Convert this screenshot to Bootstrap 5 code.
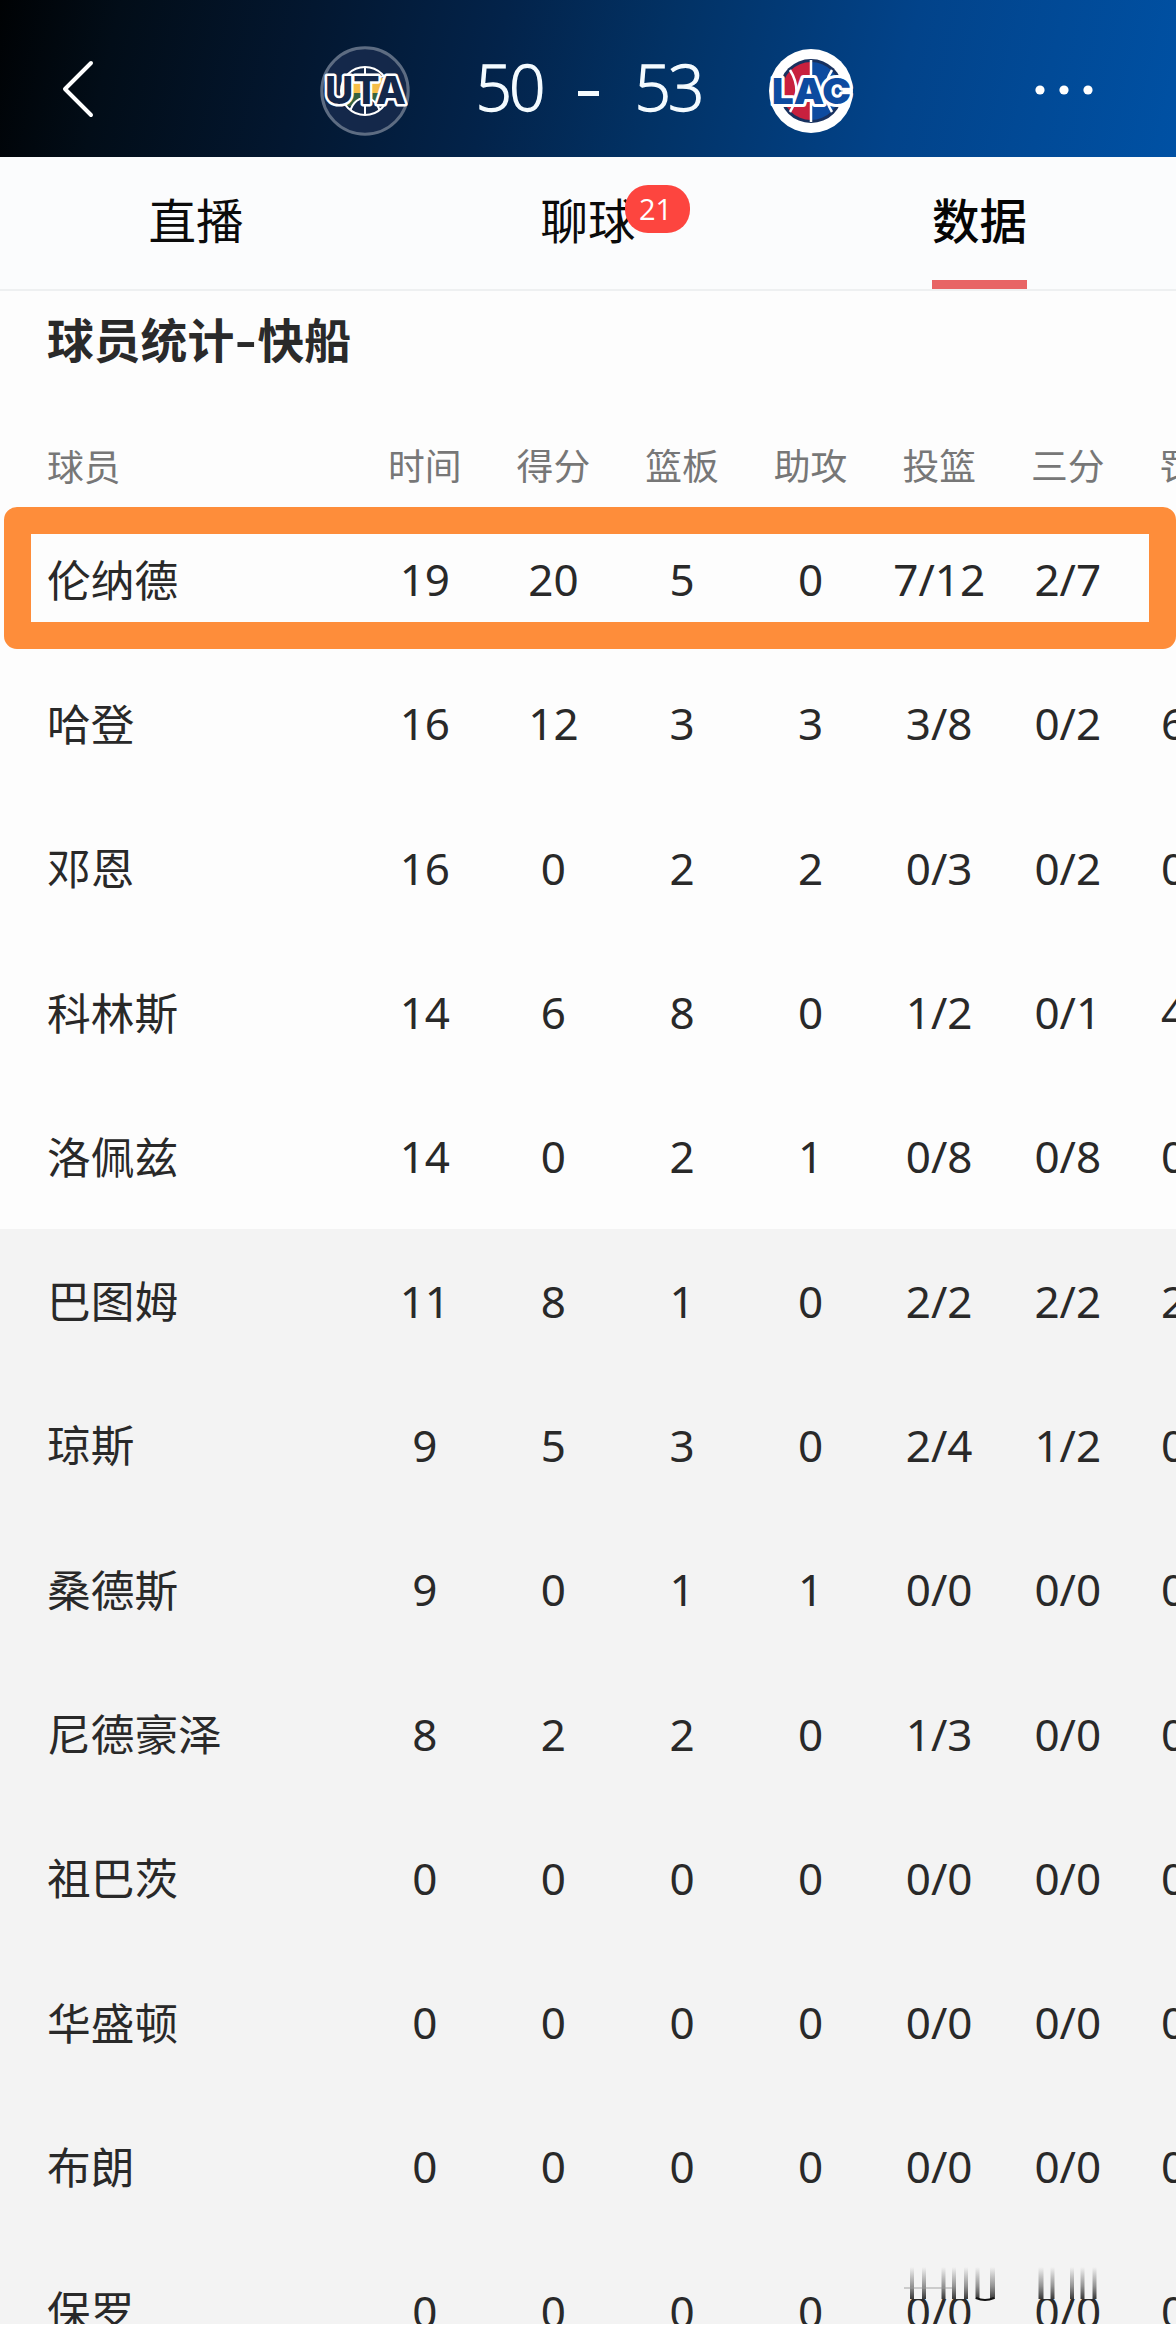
<!DOCTYPE html>
<html lang="zh-CN">
<head>
<meta charset="utf-8">
<meta name="viewport" content="width=device-width, initial-scale=1">
<title>球员统计</title>
<link href="https://cdn.jsdelivr.net/npm/bootstrap@5.3.0/dist/css/bootstrap.min.css" rel="stylesheet">
<style>
body{background:#fff;font-family:"Noto Sans","Noto Sans CJK SC",sans-serif;color:#292929;line-height:1}
.screen{width:1176px;height:2324px;background:#fdfdfd;overflow:hidden}
.scorebar{height:157px;padding:0 83px 0 60px;color:#f4fbff;background:linear-gradient(103deg,#000204 0%,#020d18 10%,#031730 26%,#03234a 42%,#023265 56%,#02438a 76%,#0051a4 100%)}
.scorebar svg{display:block;flex:none}
.match{margin-left:222px;height:157px}
.score{font-family:"Open Sans","Noto Sans",sans-serif;font-weight:300;font-size:64px;-webkit-text-stroke:1.3px #f4fbff;width:68px;text-align:center;letter-spacing:-3px;line-height:80px;margin:17px 1px 0 -1px}
.sep{width:21px;height:5px;background:#f4fbff;margin:29px 36px 0 34px}
.tabs{height:134px;background:#fbfcfd;border-bottom:2px solid #eef0f1;font-family:"Noto Sans CJK SC",sans-serif;font-size:47.5px;color:#0b0b0b}
.tab{line-height:64px;padding-top:30px;height:132px}
.tab.on{font-weight:500;border-bottom:9px solid #e86465;color:#050505;position:relative;left:-.5px}
.count{left:84px;top:28px;width:65px;height:48px;border-radius:23px;background:#fd453f;color:#fff;font:400 29px/47px "Open Sans",sans-serif;padding-right:3px}
.team{font-family:"Noto Sans CJK SC",sans-serif;font-weight:700;font-size:46.8px;line-height:60px;margin:0;padding:17px 47px 0;height:133px;color:#2a2a2a}
.dash{display:inline-block;transform:scaleX(1.3);margin:0 3px}
.line{height:144.3px;padding-left:47px;font-size:44px}
.line>div{flex:none}
.who{width:313.5px;font-family:"Noto Sans CJK SC",sans-serif;font-size:43.7px;line-height:60px;white-space:nowrap;margin-top:-5px}
.num{width:128.6px;text-align:center;white-space:nowrap;margin-top:-2px}
.cut{padding-left:29px;white-space:nowrap;margin-top:-2px}
.heads{height:84px;font-size:36.8px;color:#777;font-family:"Noto Sans CJK SC",sans-serif}
.heads .who{font-size:36.8px;margin-top:-3px}
.heads .num,.heads .cut{margin-top:-3px}
.heads .cut{padding-left:27px}
.ring{left:4px;top:-1px;width:1172px;height:142px;border:27px solid #fe8d3a;border-radius:13px}
.bench{background:#f3f3f3}
.smear{left:904px;top:26px}
</style>
<script src="https://cdn.jsdelivr.net/npm/bootstrap@5.3.0/dist/js/bootstrap.bundle.min.js"></script>
</head>
<body>
<div class="screen">
<header class="scorebar d-flex align-items-center justify-content-between">
  <svg width="36" height="60" viewBox="0 0 36 60" style="margin-top:20px"><path d="M31 4 5 30l26 26" fill="none" stroke="#fff" stroke-width="4" stroke-linecap="round" stroke-linejoin="round"/></svg>
  <div class="match d-flex align-items-center me-auto">
    <svg width="94" height="94" viewBox="-47 -47 94 94" class="mt-4">
      <circle r="43.2" fill="#14284a" stroke="#5d6c82" stroke-width="3"/>
      <clipPath id="ballU"><circle r="24"/></clipPath>
      <g clip-path="url(#ballU)"><rect x="-14" y="-13" width="38" height="15" fill="#f5bd47"/><rect x="-18" y="2" width="34" height="13" fill="#35633e"/><ellipse cy="24" rx="15" ry="17" fill="#14284a" stroke="#fff" stroke-width="2"/><path d="M0-25V-14M0 10V25M-20-15Q0-10 20-15" fill="none" stroke="#fff" stroke-width="2"/></g>
      <circle r="24" fill="none" stroke="#fff" stroke-width="2"/>
      <text x="-40" y="13" textLength="81" lengthAdjust="spacingAndGlyphs" font-family="Inter" font-weight="800" font-size="38" fill="#14284a" stroke="#fff" stroke-width="5" stroke-linejoin="round" paint-order="stroke">UTA</text>
    </svg>
    <div class="score" style="margin-left:63px">50</div><div class="sep"></div><div class="score">53</div>
    <svg width="94" height="94" viewBox="-47 -47 94 94" class="mt-4" style="margin-left:61px">
      <circle r="42" fill="#fff"/><circle r="32" fill="#18315f"/>
      <path d="M0-29a29 29 0 0 0 0 58z" fill="#c8213e"/><path d="M0-29a29 29 0 0 1 0 58z" fill="#0d4ba0"/>
      <path d="M0-31V31M-21-21Q-8 0-21 21M21-21Q8 0 21 21" fill="none" stroke="#fff" stroke-width="2.5"/>
      <text x="-39" y="13" textLength="79" lengthAdjust="spacingAndGlyphs" font-family="Inter" font-weight="900" font-size="36" fill="#0d4ba0" stroke="#fff" stroke-width="6" stroke-linejoin="round" paint-order="stroke">LAC</text>
    </svg>
  </div>
  <svg width="60" height="12" viewBox="0 0 60 12" fill="#fff" style="margin-top:23px"><circle cx="7" cy="6" r="4.6"/><circle cx="31" cy="6" r="4.6"/><circle cx="55" cy="6" r="4.6"/></svg>
</header>
<nav class="tabs d-flex">
  <div class="col-4 d-flex justify-content-center"><div class="tab">直播</div></div>
  <div class="col-4 d-flex justify-content-center"><div class="tab position-relative">聊球<span class="count position-absolute text-center">21</span></div></div>
  <div class="col-4 d-flex justify-content-center"><div class="tab on">数据</div></div>
</nav>
<h1 class="team">球员统计<span class="dash">-</span>快船</h1>
<div class="line heads d-flex align-items-center"><div class="who">球员</div><div class="num">时间</div><div class="num">得分</div><div class="num">篮板</div><div class="num">助攻</div><div class="num">投篮</div><div class="num">三分</div><div class="cut">罚</div></div>
<section>
<div class="line d-flex align-items-center position-relative"><div class="who">伦纳德</div><div class="num">19</div><div class="num">20</div><div class="num">5</div><div class="num">0</div><div class="num">7/12</div><div class="num">2/7</div><div class="ring position-absolute"></div></div>
<div class="line d-flex align-items-center"><div class="who">哈登</div><div class="num">16</div><div class="num">12</div><div class="num">3</div><div class="num">3</div><div class="num">3/8</div><div class="num">0/2</div><div class="cut">6</div></div>
<div class="line d-flex align-items-center"><div class="who">邓恩</div><div class="num">16</div><div class="num">0</div><div class="num">2</div><div class="num">2</div><div class="num">0/3</div><div class="num">0/2</div><div class="cut">0</div></div>
<div class="line d-flex align-items-center"><div class="who">科林斯</div><div class="num">14</div><div class="num">6</div><div class="num">8</div><div class="num">0</div><div class="num">1/2</div><div class="num">0/1</div><div class="cut">4</div></div>
<div class="line d-flex align-items-center"><div class="who">洛佩兹</div><div class="num">14</div><div class="num">0</div><div class="num">2</div><div class="num">1</div><div class="num">0/8</div><div class="num">0/8</div><div class="cut">0</div></div>
</section>
<section class="bench">
<div class="line d-flex align-items-center"><div class="who">巴图姆</div><div class="num">11</div><div class="num">8</div><div class="num">1</div><div class="num">0</div><div class="num">2/2</div><div class="num">2/2</div><div class="cut">2</div></div>
<div class="line d-flex align-items-center"><div class="who">琼斯</div><div class="num">9</div><div class="num">5</div><div class="num">3</div><div class="num">0</div><div class="num">2/4</div><div class="num">1/2</div><div class="cut">0</div></div>
<div class="line d-flex align-items-center"><div class="who">桑德斯</div><div class="num">9</div><div class="num">0</div><div class="num">1</div><div class="num">1</div><div class="num">0/0</div><div class="num">0/0</div><div class="cut">0</div></div>
<div class="line d-flex align-items-center"><div class="who">尼德豪泽</div><div class="num">8</div><div class="num">2</div><div class="num">2</div><div class="num">0</div><div class="num">1/3</div><div class="num">0/0</div><div class="cut">0</div></div>
<div class="line d-flex align-items-center"><div class="who">祖巴茨</div><div class="num">0</div><div class="num">0</div><div class="num">0</div><div class="num">0</div><div class="num">0/0</div><div class="num">0/0</div><div class="cut">0</div></div>
<div class="line d-flex align-items-center"><div class="who">华盛顿</div><div class="num">0</div><div class="num">0</div><div class="num">0</div><div class="num">0</div><div class="num">0/0</div><div class="num">0/0</div><div class="cut">0</div></div>
<div class="line d-flex align-items-center"><div class="who">布朗</div><div class="num">0</div><div class="num">0</div><div class="num">0</div><div class="num">0</div><div class="num">0/0</div><div class="num">0/0</div><div class="cut">0</div></div>
<div class="line d-flex align-items-center position-relative"><div class="who">保罗</div><div class="num">0</div><div class="num">0</div><div class="num">0</div><div class="num">0</div><div class="num">0/0</div><div class="num">0/0</div><div class="cut">0</div>
<svg class="smear position-absolute" width="250" height="38" viewBox="0 0 250 38">
  <defs><linearGradient id="fade" x1="0" y1="0" x2="0" y2="1"><stop offset="0" stop-color="#333" stop-opacity="0"/><stop offset=".6" stop-color="#333" stop-opacity=".5"/><stop offset="1" stop-color="#222" stop-opacity=".9"/></linearGradient></defs>
  <rect width="250" height="33" fill="#f3f3f3"/>
  <g fill="url(#fade)"><rect x="6" y="1" width="4" height="32"/><rect x="18" y="1" width="4" height="32"/><rect x="37.500" y="1" width="4" height="32"/><rect x="48" y="1" width="4" height="32"/><rect x="60" y="1" width="4" height="32"/><rect x="71.500" y="1" width="4" height="32"/><rect x="86" y="1" width="5" height="32"/><rect x="134.500" y="1" width="5" height="32"/><rect x="146.500" y="1" width="4" height="32"/><rect x="166" y="1" width="4" height="32"/><rect x="176.500" y="1" width="4" height="32"/><rect x="188.500" y="1" width="4" height="32"/></g>
  <path d="M72 32q9 4 18 0" fill="none" stroke="#111" stroke-width="2"/>
  <path d="M0 22h48" stroke="#999" stroke-opacity=".6" stroke-width="1.500"/>
</svg></div>
</section>
</div>
</body>
</html>
